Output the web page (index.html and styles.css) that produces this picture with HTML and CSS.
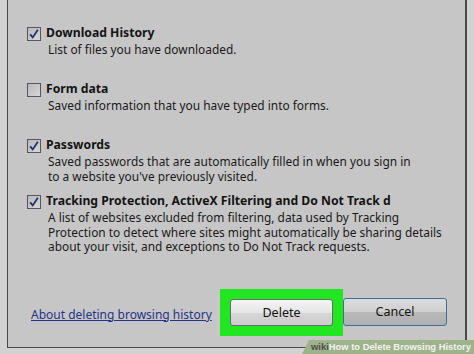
FILE: index.html
```html
<!doctype html>
<html lang="en">
  <head>
    <meta charset="UTF-8" />
    <title>Delete Browsing History</title>
    <link rel="stylesheet" href="styles.css">
  </head>
  <body>
    <div class="screen">
      <div class="dialog">
        <div class="option">
          <span class="box checked">
            <svg viewBox="0 0 14 14" width="12" height="12"><path d="M2.5 7.5 L5.5 11 L11.5 2" /></svg>
          </span>
          <div class="text">
            <div class="title">Download History</div>
            <div class="desc">List of files you have downloaded.</div>
          </div>
        </div>

        <div class="option">
          <span class="box"></span>
          <div class="text">
            <div class="title">Form data</div>
            <div class="desc">Saved information that you have typed into forms.</div>
          </div>
        </div>

        <div class="option">
          <span class="box checked">
            <svg viewBox="0 0 14 14" width="12" height="12"><path d="M2.5 7.5 L5.5 11 L11.5 2" /></svg>
          </span>
          <div class="text">
            <div class="title">Passwords</div>
            <div class="desc">Saved passwords that are automatically filled in when you sign in<br>to a website you've previously visited.</div>
          </div>
        </div>

        <div class="option">
          <span class="box checked">
            <svg viewBox="0 0 14 14" width="12" height="12"><path d="M2.5 7.5 L5.5 11 L11.5 2" /></svg>
          </span>
          <div class="text">
            <div class="title clip">Tracking Protection, ActiveX Filtering and Do Not Track d</div>
            <div class="desc">A list of websites excluded from filtering, data used by Tracking<br>Protection to detect where sites might automatically be sharing details<br>about your visit, and exceptions to Do Not Track requests.</div>
          </div>
        </div>

        <div class="footer">
          <a class="about" href="#">About deleting browsing history</a>
          <div class="highlight">
            <button type="button" class="btn">Delete</button>
          </div>
          <button type="button" class="btn default">Cancel</button>
        </div>
      </div>

      <!-- watermark banner over the corner -->
      <div class="watermark"><span class="wiki">wiki</span>How to Delete Browsing History</div>
    </div>
  </body>
</html>
```

FILE: styles.css
```css
body {
  margin: 0;
  font-family: "Noto Sans", "Open Sans", sans-serif;
  background: #d2d2d2;
}

.screen {
  position: relative;
  width: 474px;
  height: 354px;
  overflow: hidden;
  background: #d2d2d2;
}

.dialog {
  margin-left: 7px;
  width: 460px;
  height: 348px;
  box-sizing: border-box;
  background: #c6c6c6;
  border-left: 1px solid #4a4a4a;
  border-right: 2px solid #4a4a4a;
  border-bottom: 1px solid #4a4a4a;
  padding-top: 26px;
  color: #141414;
}

.option {
  display: flex;
  align-items: flex-start;
  min-height: 56px;
  padding-left: 19px;
}

.box {
  flex: none;
  width: 12px;
  height: 12px;
  margin-top: 1px;
  margin-right: 5px;
  border: 1px solid #55585e;
  background: linear-gradient(135deg, #b9b9b9 0%, #d6d6d6 100%);
  display: flex;
  align-items: center;
  justify-content: center;
}

.box svg path {
  fill: none;
  stroke: #1d2d6b;
  stroke-width: 2;
}

.title {
  font-size: 12.2px;
  font-weight: 700;
  line-height: 17px;
  margin-top: -2px;
}

.title.clip {
  white-space: nowrap;
}

.desc {
  font-size: 11.9px;
  line-height: 14.6px;
  margin-top: 1px;
  padding-left: 2px;
  color: #1a1a1a;
}

.footer {
  display: flex;
  align-items: flex-start;
  margin-top: 35px;
  padding-left: 23px;
}

.about {
  color: #23348a;
  font-size: 12px;
  margin-top: 17px;
  text-decoration: underline;
}

.highlight {
  margin-left: auto;
  padding: 10px;
  background: #22e622;
}

.btn {
  display: block;
  width: 103px;
  height: 27px;
  padding: 0;
  font-family: "Noto Sans", "Open Sans", sans-serif;
  font-size: 12.5px;
  color: #111;
  border: 1px solid #6a6a6a;
  border-radius: 3px;
  background: linear-gradient(#f4f4f4 0%, #e6e6e6 50%, #d6d6d6 51%, #cdcdcd 100%);
}

.btn.default {
  width: 104px;
  height: 28px;
  margin-top: 9px;
  margin-right: 18px;
  border-color: #3a6f9c;
  background: linear-gradient(#dcdcdc 0%, #cfcfcf 50%, #b8b8b8 51%, #b0b0b0 100%);
}

.watermark {
  position: absolute;
  right: 0;
  bottom: 0;
  height: 14px;
  padding: 0 3px 0 9px;
  background: #9eb38a;
  clip-path: polygon(7px 0, 100% 0, 100% 100%, 0 100%);
  color: #f2f2f2;
  font-family: "Liberation Sans", sans-serif;
  font-size: 9.4px;
  font-weight: 700;
  line-height: 14px;
  white-space: nowrap;
}

.wiki {
  color: #4d4d4d;
}
```
